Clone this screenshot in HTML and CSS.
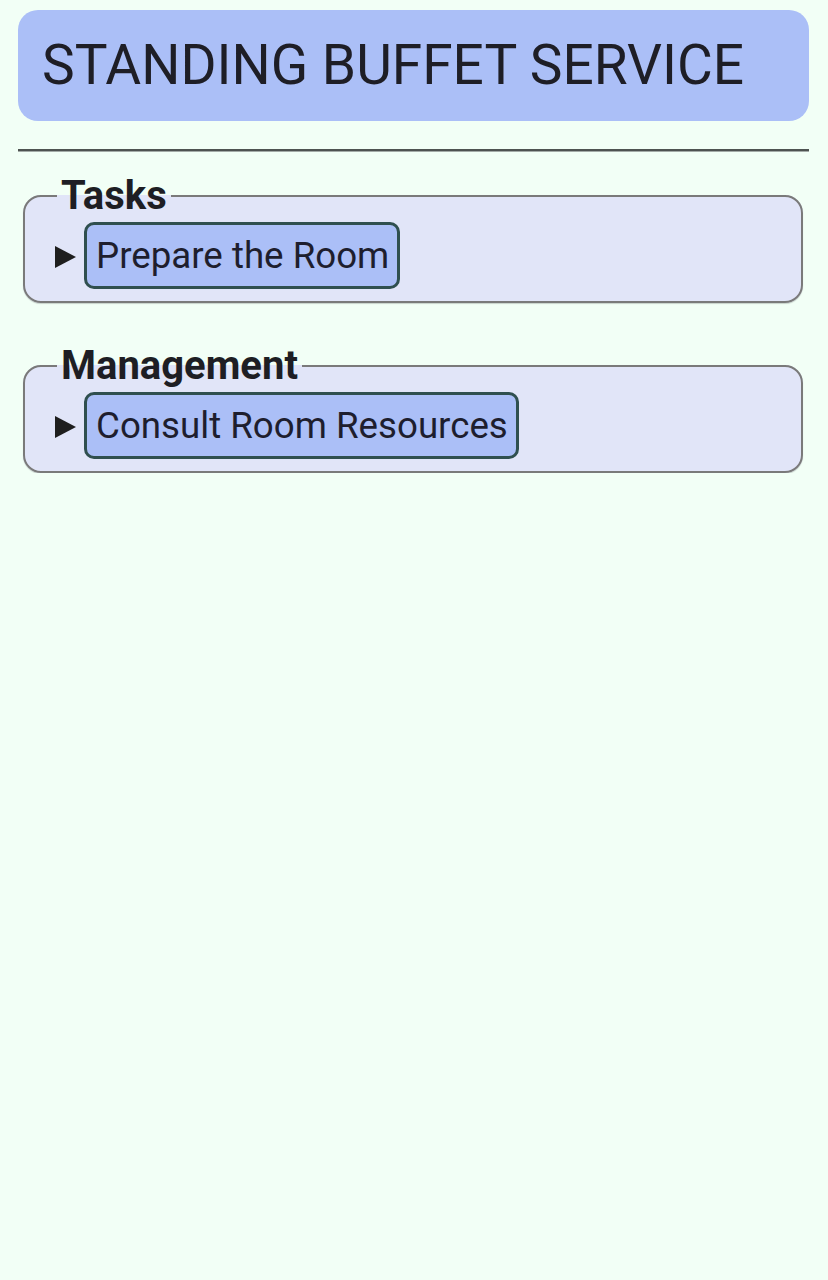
FILE: index.html
```html
<!DOCTYPE html>
<html lang="en">
<head>
<meta charset="utf-8">
<title>Standing Buffet Service</title>
<link rel="stylesheet" href="styles.css">
</head>
<body>
<header class="title-bar">
  <h1 class="title">STANDING BUFFET SERVICE</h1>
</header>
<hr class="divider">
<fieldset class="group">
  <legend class="group-label">Tasks</legend>
  <details class="item">
    <summary class="item-summary"><span class="item-btn">Prepare the Room</span></summary>
  </details>
</fieldset>
<fieldset class="group">
  <legend class="group-label">Management</legend>
  <details class="item">
    <summary class="item-summary"><span class="item-btn">Consult Room Resources</span></summary>
  </details>
</fieldset>
</body>
</html>
```
FILE: styles.css
```css
html, body {
  margin: 0;
  padding: 0;
}
body {
  background: #f2fff6;
  font-family: Roboto, "Noto Sans", sans-serif;
  color: #1e1e26;
  padding: 10px 19px 0 18px;
}
.title-bar {
  background: #abbff7;
  border-radius: 20px;
  height: 111px;
  display: flex;
  align-items: center;
  padding: 0 24px;
  box-sizing: border-box;
}
.title {
  margin: 0;
  font-weight: 400;
  font-size: 55px;
  line-height: 1;
  color: #1e1e26;
  padding-bottom: 0;
}
.divider {
  margin: 28px 0 0 0;
  border: 0;
  border-top: 2px solid #4e5351;
  border-bottom: 1px solid #a3aba7;
  height: 0;
}
.group {
  margin: 21px 6px 0 5px;
  padding: 3px 20px 12px 30px;
  border: 2px solid #7a7a7a;
  border-radius: 18px;
  background: #e1e5f8;
  box-shadow: 0 1px 1px rgba(0,0,0,0.18);
}
.group + .group {
  margin-top: 40px;
}
.group-label {
  padding: 0 4px;
  margin-left: 2px;
  font-weight: 700;
  font-size: 40px;
  line-height: 46px;
  color: #1e1e24;
}
.item-summary {
  list-style: none;
  display: flex;
  align-items: center;
  cursor: pointer;
}
.item-summary::-webkit-details-marker {
  display: none;
}
.item-summary::before {
  content: "";
  width: 0;
  height: 0;
  border-left: 21px solid #1e1e1e;
  border-top: 11px solid transparent;
  border-bottom: 11px solid transparent;
  margin-right: 8px;
  margin-top: 2px;
}
.item-btn {
  display: inline-block;
  background: #abbff7;
  border: 3px solid #2f4f4f;
  border-radius: 10px;
  padding: 7px 8px 7px 9px;
  font-size: 36.7px;
  line-height: 47px;
  color: #1e1e2e;
}
```
